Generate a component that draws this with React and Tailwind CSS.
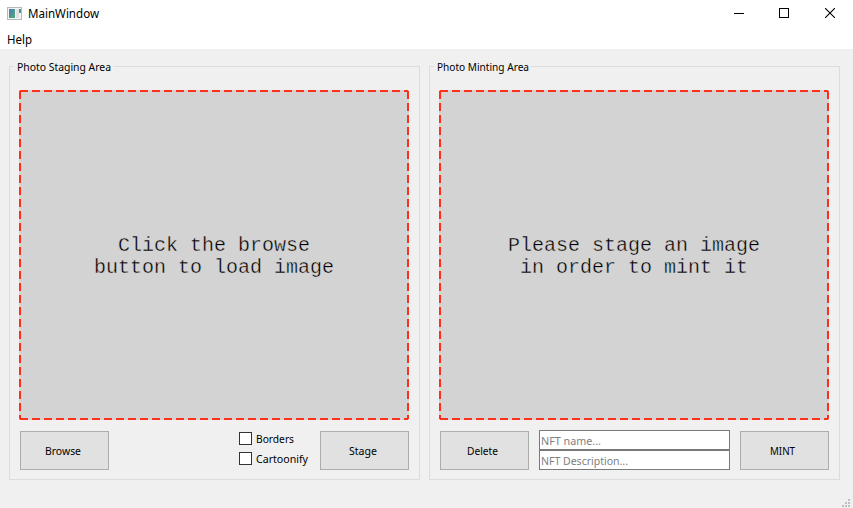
const ui = "font-['Noto_Sans','Open_Sans',sans-serif]";

function DashedView({ lines }) {
  return (
    <div className="relative flex h-[330px] w-[390px] items-center justify-center bg-[#d3d3d3] pt-1">
      <svg className="absolute inset-0" width="390" height="330" fill="none" stroke="#ff3019" strokeWidth="2" strokeDasharray="8 4" shapeRendering="crispEdges">
        <path d="M1 1H389" />
        <path d="M389 1V329" />
        <path d="M1 329H389" />
        <path d="M1 1V329" />
      </svg>
      <div className="whitespace-pre text-center font-['Courier_New','Liberation_Mono',monospace] text-[20px] leading-[22px] text-black [-webkit-text-stroke:0.4px_#d3d3d3]">
        {lines.map((l) => (
          <div key={l}>{l}</div>
        ))}
      </div>
    </div>
  );
}

function PushButton({ label, width }) {
  return (
    <button className="flex h-[39px] w-[89px] shrink-0 items-center justify-center border border-[#adadad] bg-[#e1e1e1] pr-1">
      <Label text={label} width={width} />
    </button>
  );
}

function Label({ text, width, size = 11, color = "#000" }) {
  return (
    <svg width={width} height="16" className="block shrink-0 overflow-visible" style={{ color }}>
      <text x="0" y="12" fill="currentColor" fontSize={size} textLength={width} lengthAdjust="spacingAndGlyphs" className={ui}>
        {text}
      </text>
    </svg>
  );
}

function Group({ title, titleWidth, children }) {
  return (
    <fieldset className="h-[421px] w-[411px]">
      <div className="flex h-[7px] items-start">
        <div className="z-10 ml-[5px] bg-[#f0f0f0] pl-[3px] pr-[2px]">
          <Label text={title} width={titleWidth} />
        </div>
      </div>
      <div className="h-[414px] border border-[#dcdcdc] pl-[9px] pt-[23px]">{children}</div>
    </fieldset>
  );
}

function Check({ label, width }) {
  return (
    <label className="flex h-5 items-start gap-1">
      <span className="mt-0.5 size-[13px] border border-[#333] bg-white" />
      <span className="pt-px">
        <Label text={label} width={width} />
      </span>
    </label>
  );
}

function Field({ label, width }) {
  return (
    <div className="flex h-5 w-[191px] items-center border border-[#7a7a7a] bg-white pl-px pt-0.5">
      <Label text={label} width={width} color="#808080" />
    </div>
  );
}

export default function App() {
  return (
    <div className="h-[508px] w-[853px] overflow-hidden bg-[#f0f0f0]">
      <header className="flex h-7 items-center bg-white">
        <svg className="ml-[7px]" width="16" height="14" shapeRendering="crispEdges">
          <defs>
            <linearGradient id="screen" x1="0" y1="0" x2="1" y2="1">
              <stop offset="0" stopColor="#4779b8" />
              <stop offset="1" stopColor="#55ad78" />
            </linearGradient>
          </defs>
          <rect x=".5" y=".5" width="14" height="12" fill="#f4f4f4" stroke="#b4b9bc" />
          <rect x="2" y="2" width="6" height="9" fill="url(#screen)" />
          <rect x="9" y="2" width="3" height="9" fill="#e2e2e2" />
          <rect x="12" y="2" width="2" height="4" fill="url(#screen)" />
        </svg>
        <div className="ml-[5px]">
          <Label text="MainWindow" width={71} size={12} />
        </div>
        <div className="mb-[2px] ml-auto mr-[18px] flex items-center">
          <svg width="10" height="10" shapeRendering="crispEdges"><path d="M0 5.5H10" stroke="#000" /></svg>
          <svg className="ml-[35px]" width="10" height="10" shapeRendering="crispEdges"><path d="M.5.5H9.5V9.5H.5Z" fill="none" stroke="#000" /></svg>
          <svg className="ml-9" width="10" height="10"><path d="M0 0L10 10M10 0L0 10" stroke="#000" strokeWidth="1.1" /></svg>
        </div>
      </header>
      <nav className="flex h-[21px] items-start bg-white pl-[7px] pt-1">
        <Label text="Help" width={25} size={12} />
      </nav>
      <main className="flex h-[441px] gap-[9px] pl-[9px] pt-[10px]">
        <Group title="Photo Staging Area" titleWidth={94}>
          <DashedView lines={["Click the browse", "button to load image"]} />
          <div className="mt-[10px] flex h-10 w-[390px] items-end pl-px">
            <PushButton label="Browse" width={36} />
            <div className="ml-auto mr-3">
              <Check label="Borders" width={38} />
              <Check label="Cartoonify" width={52} />
            </div>
            <PushButton label="Stage" width={28} />
          </div>
        </Group>
        <Group title="Photo Minting Area" titleWidth={92}>
          <DashedView lines={["Please stage an image", "in order to mint it"]} />
          <div className="mt-[10px] flex h-10 w-[390px] items-end pl-px">
            <PushButton label="Delete" width={31} />
            <div className="mx-[10px]">
              <Field label="NFT name..." width={60} />
              <Field label="NFT Description..." width={87} />
            </div>
            <PushButton label="MINT" width={25} />
          </div>
        </Group>
      </main>
      <svg className="absolute left-[842px] top-[499px]" width="9" height="9" fill="#bfbfbf" shapeRendering="crispEdges">
        <path d="M6 0h2v2h-2zM3 3h2v2h-2zM6 3h2v2h-2zM0 6h2v2h-2zM3 6h2v2h-2zM6 6h2v2h-2z" />
      </svg>
    </div>
  );
}
